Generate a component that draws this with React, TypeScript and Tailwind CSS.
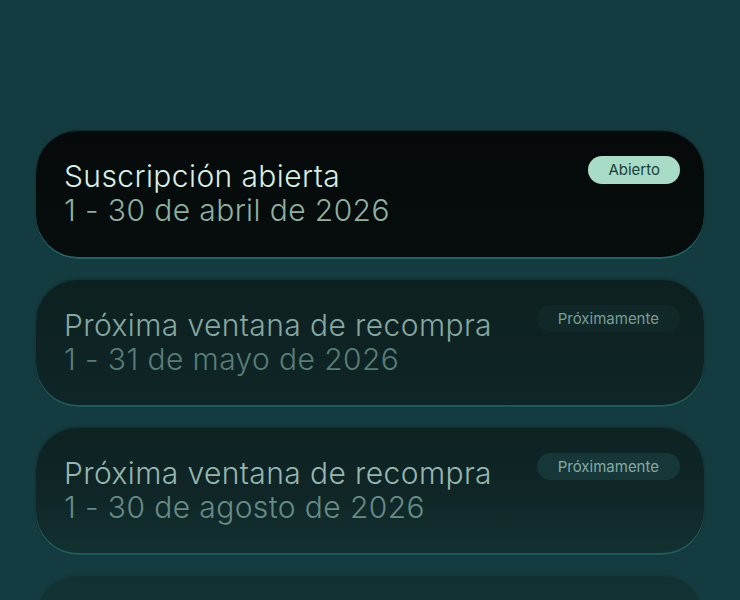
const WINDOWS = [
  {
    title: 'Suscripción abierta',
    dates: '1 - 30 de abril de 2026',
    badge: 'Abierto',
    open: true,
  },
  {
    title: 'Próxima ventana de recompra',
    dates: '1 - 31 de mayo de 2026',
    badge: 'Próximamente',
    open: false,
  },
  {
    title: 'Próxima ventana de recompra',
    dates: '1 - 30 de agosto de 2026',
    badge: 'Próximamente',
    open: false,
  },
]

export default function App() {
  return (
    <div
      className="w-[740px] h-[600px] overflow-hidden bg-[#143c40] px-[36px] pt-[131px] flex flex-col gap-[21px]"
      style={{ fontFamily: 'Inter, "Liberation Sans", sans-serif' }}
    >
      {WINDOWS.map((w, i) => (
        <div
          key={i}
          className={
            w.open
              ? 'shrink-0 h-[128px] rounded-[42px] bg-gradient-to-b from-[#050909] to-[#070d0d] shadow-[inset_0_-2px_0_#1f6466,0_-1px_2px_rgba(0,0,0,0.35)] pl-[28px] pr-[24px] pt-[25px] flex items-start justify-between'
              : i === 1
              ? 'shrink-0 h-[127px] rounded-[42px] bg-gradient-to-b from-[#0d2020] to-[#0f2526] shadow-[inset_0_-2px_0_#1c5a5c,0_-1px_3px_rgba(0,0,0,0.3)] pl-[28px] pr-[24px] pt-[25px] flex items-start justify-between'
              : 'shrink-0 h-[127px] rounded-[42px] bg-gradient-to-b from-[#0e2222] via-[#0f2526] to-[#133131] shadow-[inset_0_-2px_0_#1c5a5c,0_-1px_3px_rgba(0,0,0,0.3)] pl-[28px] pr-[24px] pt-[25px] flex items-start justify-between'
          }
        >
          <div className="pt-[3px] text-[30px] leading-[34px] font-light tracking-[0.4px]">
            <div className={w.open ? 'text-[#d6eee4]' : i === 1 ? 'text-[#86a8a0]' : 'text-[#96b7af]'}>
              {w.title}
            </div>
            <div className={w.open ? 'text-[#8db1a1]' : i === 1 ? 'text-[#587d77]' : 'text-[#668c85]'}>
              {w.dates}
            </div>
          </div>
          <div
            className={
              w.open
                ? 'shrink-0 h-[28px] px-[20px] rounded-full bg-[#a9dcc7] text-[#17403a] text-[15px] leading-[28px]'
                : i === 1
                ? 'shrink-0 h-[27px] px-[21px] rounded-full bg-[#102828] text-[#789e96] text-[15px] leading-[27px]'
                : 'shrink-0 h-[27px] px-[21px] rounded-full bg-[#153738] text-[#86aaa2] text-[15px] leading-[27px]'
            }
          >
            {w.badge}
          </div>
        </div>
      ))}
      <div className="shrink-0 h-[127px] rounded-[42px] bg-gradient-to-b from-[#113131] to-[#143c40] shadow-[0_-1px_2px_rgba(0,0,0,0.12)]" />
    </div>
  )
}
